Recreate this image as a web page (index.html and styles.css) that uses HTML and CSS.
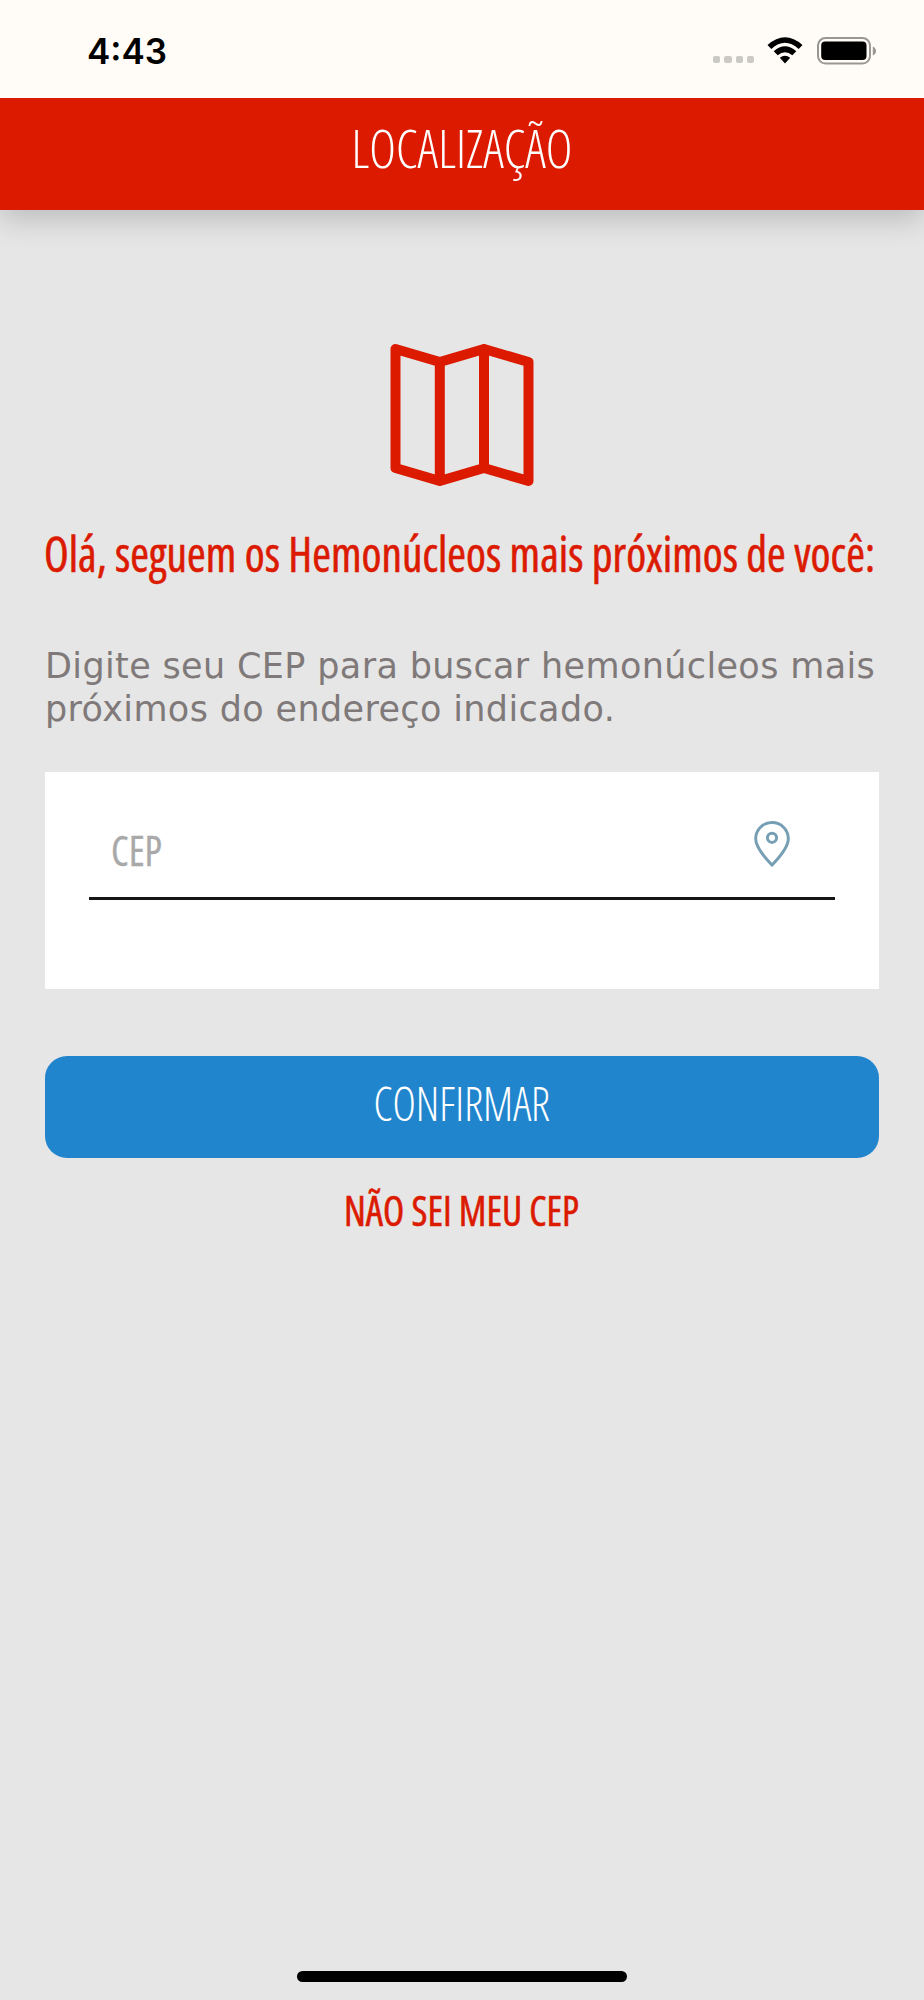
FILE: index.html
```html
<!DOCTYPE html>
<html lang="pt-BR">
<head>
<meta charset="utf-8">
<title>Localização</title>
<link rel="stylesheet" href="styles.css">
</head>
<body>
<div class="screen">
  <div class="status">
    <span class="clock">4:43</span>
    <div class="dots"><i></i><i></i><i></i><i></i></div>
    <svg class="wifi" width="36" height="28" viewBox="0 0 36 28">
      <path d="M0.5 8 Q18 -7.5 35.5 8 L31.7 12 Q18 -0.6 4.3 12 Z"/>
      <path d="M6.7 14.3 Q18 4.4 29.3 14.3 L25.3 18.3 Q18 12 10.7 18.3 Z"/>
      <path d="M12.8 20.7 Q18 16.8 23.2 20.7 L18 26.4 Z"/>
    </svg>
    <svg class="battery" width="60" height="28" viewBox="0 0 60 28">
      <rect x="1" y="1" width="52" height="25.6" rx="7.5" fill="none" stroke="#999793" stroke-width="2"/>
      <rect x="4.2" y="4.5" width="45.3" height="18.6" rx="4"/>
      <path d="M55.8 9.5 Q59 11 59 14 Q59 17 55.8 18.5 Z" fill="#999793"/>
    </svg>
  </div>
  <header class="bar">
    <svg class="label" width="924" height="112"><text class="light s53" x="351.5" y="69.7" textLength="221" lengthAdjust="spacingAndGlyphs">LOCALIZAÇÃO</text></svg>
  </header>
  <main class="content">
    <svg class="map" width="144" height="144" viewBox="390 343 144 144">
      <path d="M395.5 349 L439.8 362 L484 349 L528.5 362 V481 L484 468 L439.8 481 L395.5 468 Z M439.8 362 V481 M484 349 V468"/>
    </svg>
    <svg class="title" width="844" height="84"><text class="medium s49" x="4" y="60.5" textLength="831" lengthAdjust="spacingAndGlyphs">Olá, seguem os Hemonúcleos mais próximos de você:</text></svg>
    <p class="hint">Digite seu CEP para buscar hemonúcleos mais<br>próximos do endereço indicado.</p>
    <section class="card">
      <div class="field">
        <svg class="label" width="60" height="60"><text class="regular s42" x="1" y="44.2" textLength="51" lengthAdjust="spacingAndGlyphs">CEP</text></svg>
        <svg class="pin" width="38" height="48" viewBox="0 0 38 48">
          <path d="M19 45.2 C15 40.5 2.7 29 2.7 18.7 C2.7 9.5 10 2.6 19 2.6 C28 2.6 35.3 9.5 35.3 18.7 C35.3 29 23 40.5 19 45.2 Z"/>
          <circle cx="19" cy="17.8" r="4.6"/>
        </svg>
      </div>
    </section>
    <div class="button"><svg class="label" width="834" height="102"><text class="light s48" x="328.5" y="64.5" textLength="176.5" lengthAdjust="spacingAndGlyphs">CONFIRMAR</text></svg></div>
    <svg class="link" width="834" height="84"><text class="medium s42" x="299" y="67.5" textLength="235" lengthAdjust="spacingAndGlyphs">NÃO SEI MEU CEP</text></svg>
  </main>
  <div class="home"></div>
</div>
</body>
</html>
```
FILE: styles.css
```css
body { margin: 0; }
.screen {
  box-sizing: border-box;
  width: 924px;
  height: 2000px;
  display: flex;
  flex-direction: column;
  background: #e6e6e6;
  overflow: hidden;
}
svg { display: block; flex: none; overflow: visible; }
text { font-family: "Open Sans", "Noto Sans", sans-serif; font-stretch: 75%; }
.light { font-weight: 300; fill: #fff; }
.medium { font-weight: 500; fill: #db1a00; stroke: #db1a00; stroke-width: .6px; }
.regular { font-weight: 400; fill: #a9a9a9; stroke: #a9a9a9; stroke-width: .3px; }
.s53 { font-size: 53px; }
.s49 { font-size: 48.6px; }
.s48 { font-size: 48px; }
.s42 { font-size: 42px; }

.status {
  box-sizing: border-box;
  position: relative;
  z-index: 1;
  height: 98px;
  padding: 0 46px 0 87px;
  display: flex;
  align-items: flex-start;
  background: #fffcf7;
}
.clock {
  font: 600 35px/42px Inter, sans-serif;
  margin-top: 30px;
  margin-right: auto;
}
.dots { display: flex; gap: 4px; margin: 56px 13px 0 0; }
.dots i { width: 7.2px; height: 7.2px; border-radius: 2px; background: #cccac6; }
.wifi { margin: 36.5px 14px 0 0; }
.battery { margin: 36.5px 1px 0 0; }
.bar {
  height: 112px;
  background: #db1a00;
  box-shadow: 0 8px 30px rgba(0, 0, 0, .2);
}
.content {
  flex: 1;
  padding: 0 45px;
  display: flex;
  flex-direction: column;
}
.map { align-self: center; margin-top: 133px; }
.map path { fill: none; stroke: #db1a00; stroke-width: 10; stroke-linejoin: round; stroke-linecap: round; }
.title { align-self: center; margin-top: 24px; }
.hint {
  margin: 50px 0 0;
  height: 86px;
  font: 35px/42.5px Verdana, "DejaVu Sans", sans-serif;
  letter-spacing: .36px;
  color: #807979;
  white-space: nowrap;
}
.card {
  box-sizing: border-box;
  height: 217px;
  margin-top: 41px;
  padding: 47px 44px 0;
  background: #fff;
}
.field {
  box-sizing: border-box;
  height: 81px;
  padding: 2.5px 44.5px 0 21px;
  display: flex;
  justify-content: space-between;
  border-bottom: 3px solid #161616;
}
.pin { margin-top: -2px; }
.pin path, .pin circle { fill: none; stroke: #779fb4; stroke-width: 3; stroke-linejoin: round; }
.button {
  height: 102.5px;
  margin-top: 66.5px;
  border-radius: 22px;
  background: #2185ce;
}
.home {
  width: 330px;
  height: 11px;
  margin: 0 auto 18px;
  border-radius: 6px;
  background: #000;
}
```
